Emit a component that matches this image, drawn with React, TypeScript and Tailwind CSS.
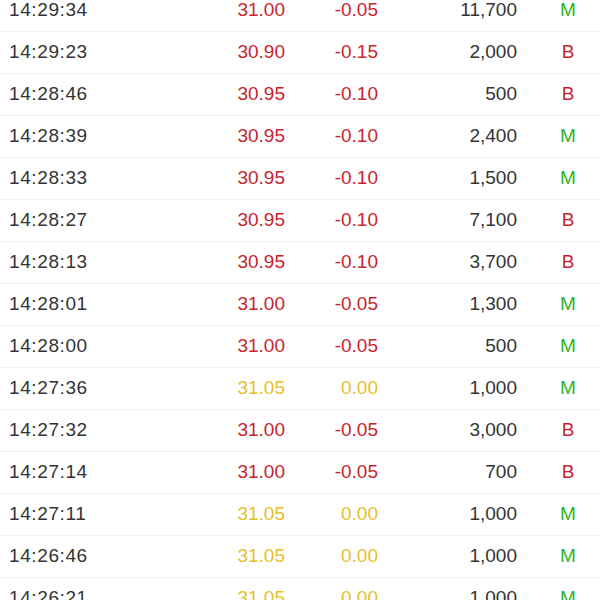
type Tick = {
  time: string;
  price: string;
  change: string;
  volume: string;
  side: "M" | "B";
};

const ticks: Tick[] = [
  { time: "14:29:34", price: "31.00", change: "-0.05", volume: "11,700", side: "M" },
  { time: "14:29:23", price: "30.90", change: "-0.15", volume: "2,000", side: "B" },
  { time: "14:28:46", price: "30.95", change: "-0.10", volume: "500", side: "B" },
  { time: "14:28:39", price: "30.95", change: "-0.10", volume: "2,400", side: "M" },
  { time: "14:28:33", price: "30.95", change: "-0.10", volume: "1,500", side: "M" },
  { time: "14:28:27", price: "30.95", change: "-0.10", volume: "7,100", side: "B" },
  { time: "14:28:13", price: "30.95", change: "-0.10", volume: "3,700", side: "B" },
  { time: "14:28:01", price: "31.00", change: "-0.05", volume: "1,300", side: "M" },
  { time: "14:28:00", price: "31.00", change: "-0.05", volume: "500", side: "M" },
  { time: "14:27:36", price: "31.05", change: "0.00", volume: "1,000", side: "M" },
  { time: "14:27:32", price: "31.00", change: "-0.05", volume: "3,000", side: "B" },
  { time: "14:27:14", price: "31.00", change: "-0.05", volume: "700", side: "B" },
  { time: "14:27:11", price: "31.05", change: "0.00", volume: "1,000", side: "M" },
  { time: "14:26:46", price: "31.05", change: "0.00", volume: "1,000", side: "M" },
  { time: "14:26:21", price: "31.05", change: "0.00", volume: "1,000", side: "M" },
];

function TickRow({ tick }: { tick: Tick }) {
  const flat = tick.change === "0.00";
  const moveColor = flat ? "text-[#e6bf2a]" : "text-[#c8242e]";
  const sideColor = tick.side === "M" ? "text-[#2cb52c]" : "text-[#c8242e]";

  return (
    <div className="flex h-[42px] items-center border-b border-[#efefef] text-[19px]">
      <div className="w-[200px] pl-[9px] tracking-[0.6px] text-[#333333]">{tick.time}</div>
      <div className={`w-[85px] text-right ${moveColor}`}>{tick.price}</div>
      <div className={`w-[93px] text-right ${moveColor}`}>{tick.change}</div>
      <div className="w-[139px] text-right text-[#333333]">{tick.volume}</div>
      <div className={`ml-[36px] w-[30px] text-center ${sideColor}`}>{tick.side}</div>
    </div>
  );
}

export default function App() {
  return (
    <div className="h-[600px] w-[600px] overflow-hidden bg-white font-['Liberation_Sans',Arial,sans-serif]">
      <div className="-mt-[10px]">
        {ticks.map((t) => (
          <TickRow key={t.time} tick={t} />
        ))}
      </div>
    </div>
  );
}
